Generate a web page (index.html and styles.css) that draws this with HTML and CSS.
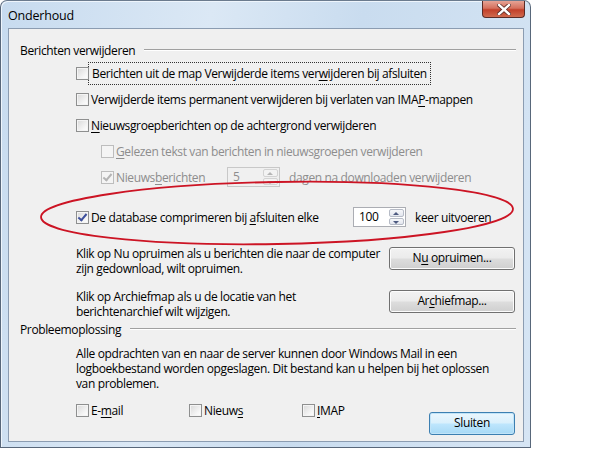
FILE: index.html
```html
<!DOCTYPE html>
<html lang="nl">
<head>
    <meta charset="UTF-8">
    <title>Onderhoud</title>
    <link rel="stylesheet" href="styles.css">
</head>
<body>
    <div class="window">
        <div class="titlebar">
            <span class="title">Onderhoud</span>
            <span class="close-btn">
                <svg width="14" height="11" viewBox="0 0 14 11"><path d="M2 1 L12 10 M12 1 L2 10" stroke="#5a2b26" stroke-width="4" stroke-linecap="square"/><path d="M2 1 L12 10 M12 1 L2 10" stroke="#fff" stroke-width="2.4" stroke-linecap="square"/></svg>
            </span>
        </div>
        <div class="client">
            <div class="group-head">
                <span>Berichten verwijderen</span>
                <span class="rule"></span>
            </div>

            <div class="row first">
                <span class="check"></span>
                <span class="focus">Berichten uit de map Verwijderde items ver<u>w</u>ijderen bij afsluiten</span>
            </div>
            <div class="row">
                <span class="check"></span>
                <span>Verwijderde items permanent verwijderen bij verlaten van IMA<u>P</u>-mappen</span>
            </div>
            <div class="row">
                <span class="check"></span>
                <span><u>N</u>ieuwsgroepberichten op de achtergrond verwijderen</span>
            </div>
            <div class="row indent disabled">
                <span class="check"></span>
                <span><u>G</u>elezen tekst van berichten in nieuwsgroepen verwijderen</span>
            </div>
            <div class="row indent disabled">
                <span class="check checked"></span>
                <span class="label-news">Nieuws<u>b</u>erichten</span>
                <span class="spin">
                    <span class="spin-value">5</span>
                    <span class="spin-btns"><span class="spin-up"></span><span class="spin-down"></span></span>
                </span>
                <span>dagen na downloaden verwijderen</span>
            </div>
            <div class="row compress">
                <span class="check checked"></span>
                <span class="label-compress">De database comprimeren bij <u>a</u>fsluiten elke</span>
                <span class="spin">
                    <span class="spin-value">100</span>
                    <span class="spin-btns"><span class="spin-up"></span><span class="spin-down"></span></span>
                </span>
                <span>keer uitvoeren</span>
            </div>

            <div class="action">
                <p>Klik op Nu opruimen als u berichten die naar de computer<br>zijn gedownload, wilt opruimen.</p>
                <span class="btn">N<u>u</u> opruimen...</span>
            </div>
            <div class="action">
                <p>Klik op Archiefmap als u de locatie van het<br>berichtenarchief wilt wijzigen.</p>
                <span class="btn">Ar<u>c</u>hiefmap...</span>
            </div>

            <div class="group-head second">
                <span>Probleemoplossing</span>
                <span class="rule"></span>
            </div>
            <p class="log-text">Alle opdrachten van en naar de server kunnen door Windows Mail in een<br>logboekbestand worden opgeslagen. Dit bestand kan u helpen bij het oplossen<br>van problemen.</p>
            <div class="bottom">
                <div class="log-checks">
                    <span class="log-item"><span class="check"></span>E-<u>m</u>ail</span>
                    <span class="log-item"><span class="check"></span>Nieuw<u>s</u></span>
                    <span class="log-item"><span class="check"></span><u>I</u>MAP</span>
                </div>
                <span class="btn default">Sluiten</span>
            </div>
        </div>
    </div>

    <svg class="annotation" width="593" height="449" viewBox="0 0 593 449">
        <ellipse cx="277" cy="213" rx="236" ry="31" fill="none" stroke="#cc1424" stroke-width="1.8" transform="rotate(-1 277 213)"/>
    </svg>
</body>
</html>
```

FILE: styles.css
```css
body {
    margin: 0;
    background: #fff;
    font-family: "Open Sans", "Noto Sans", sans-serif;
    font-size: 12px;
    letter-spacing: -0.37px;
    color: #000;
    position: relative;
    width: 593px;
    height: 449px;
    overflow: hidden;
}

u {
    text-decoration-thickness: 1px;
    text-underline-offset: 2px;
}

.window {
    box-sizing: border-box;
    width: 531px;
    height: 448px;
    padding: 0 6px 5px 7px;
    border: 1px solid #58677a;
    border-top-color: #6b7b8e;
    border-radius: 7px 7px 0 0;
    background: linear-gradient(100deg, #c7dbef 0%, #dbe8f5 35%, #c9dcef 60%, #d6e5f4 100%);
    box-shadow: inset 1px 1px 0 #eef5fc;
    display: flex;
    flex-direction: column;
}

.titlebar {
    height: 27px;
    flex-shrink: 0;
    display: flex;
    align-items: flex-start;
    justify-content: space-between;
}

.title {
    padding: 6px 0 0 0;
    font-size: 12.5px;
    letter-spacing: -0.2px;
    color: #000;
}

.close-btn {
    width: 41px;
    height: 16px;
    margin-right: -1px;
    border: 1px solid #5a2b26;
    border-top: none;
    border-radius: 0 0 4px 4px;
    background: linear-gradient(#e6a395 0%, #d5705d 45%, #c2402a 55%, #d06a4e 100%);
    display: flex;
    align-items: center;
    justify-content: center;
}

.client {
    flex: 1;
    background: #f0f0f0;
    border: 1px solid #8b9cb1;
    padding: 13px 7px 0 11px;
    display: flex;
    flex-direction: column;
}

.group-head {
    display: flex;
    align-items: center;
    height: 16px;
}

.group-head .rule {
    flex: 1;
    height: 1px;
    background: #a0a0a0;
    border-bottom: 1px solid #fff;
    margin-left: 9px;
}

.group-head.second {
    margin-top: 2px;
}

.row {
    display: flex;
    align-items: center;
    height: 26px;
    padding-left: 56px;
}

.row.first {
    margin-top: 2px;
}

.row.indent {
    padding-left: 81px;
}

.row.disabled {
    color: #8d8d8d;
}

.check {
    width: 11px;
    height: 11px;
    border: 1px solid #8e8f8f;
    background: linear-gradient(135deg, #d8d8d8 0%, #f6f6f6 70%, #fff 100%);
    box-shadow: inset 0 0 0 1px #f4f4f4;
    margin-right: 2px;
    flex-shrink: 0;
    position: relative;
}

.check.checked::after {
    content: "";
    position: absolute;
    left: 3px;
    top: 0;
    width: 3px;
    height: 7px;
    border: solid #3d4f9c;
    border-width: 0 2px 2px 0;
    transform: rotate(40deg);
}

.disabled .check {
    border-color: #bdbdbd;
    background: #f4f4f4;
}

.disabled .check.checked::after {
    border-color: #b4b4b4;
}

.focus {
    outline: 1px dotted #333;
    outline-offset: 2px;
    padding: 0 1px;
}

.label-news {
    width: 111px;
}

.spin {
    display: flex;
    width: 53px;
    height: 20px;
    border: 1px solid #abadb3;
    background: #fff;
    margin-right: 9px;
    box-sizing: border-box;
    flex-shrink: 0;
}

.disabled .spin {
    background: #f0f0f0;
    border-color: #c8c8c8;
}

.spin-value {
    flex: 1;
    padding: 1px 0 0 5px;
    line-height: 16px;
}

.spin-btns {
    width: 15px;
    display: flex;
    flex-direction: column;
    gap: 1px;
    padding: 1px;
}

.spin-up, .spin-down {
    flex: 1;
    border: 1px solid #b6bbc6;
    border-radius: 2px;
    background: linear-gradient(#f6f7fa, #e3e6ee);
    position: relative;
}

.spin-up::after, .spin-down::after {
    content: "";
    position: absolute;
    left: 3px;
    top: 2px;
    border-left: 3px solid transparent;
    border-right: 3px solid transparent;
}

.spin-up::after {
    border-bottom: 3px solid #4d5a80;
}

.spin-down::after {
    border-top: 3px solid #4d5a80;
}

.disabled .spin-up, .disabled .spin-down {
    border-color: #d3d3d3;
    background: #f3f3f3;
}

.disabled .spin-up::after {
    border-bottom-color: #b5b5b5;
}

.disabled .spin-down::after {
    border-top-color: #b5b5b5;
}

.row.compress {
    margin-top: 14px;
}

.label-compress {
    width: 262px;
}

.action {
    display: flex;
    justify-content: space-between;
    align-items: flex-start;
    padding-left: 56px;
    margin-top: 16px;
}

.action + .action {
    margin-top: 13px;
}

.action p {
    margin: 0;
    line-height: 15px;
}

.btn {
    box-sizing: border-box;
    width: 126px;
    height: 23px;
    line-height: 20px;
    text-align: center;
    border: 1px solid #707070;
    border-radius: 3px;
    background: linear-gradient(#f2f2f2 0%, #ebebeb 48%, #dddddd 52%, #cfcfcf 100%);
    box-shadow: inset 0 0 0 1px #fcfcfc;
    margin-right: 1px;
    margin-top: 1px;
}

.btn.default {
    width: 86px;
    border-color: #3c7fb1;
    background: linear-gradient(#eaf6fd 0%, #d9f0fc 48%, #bee6fd 52%, #a7d9f5 100%);
    box-shadow: inset 0 0 0 1px #c1e4f8;
    margin-top: 10px;
}

.log-text {
    margin: 9px 0 0 56px;
    line-height: 15px;
}

.bottom {
    display: flex;
    justify-content: space-between;
    align-items: flex-start;
    padding-left: 56px;
    margin-top: 11px;
}

.log-checks {
    display: flex;
}

.log-item {
    display: flex;
    align-items: center;
    width: 113px;
}

.annotation {
    position: absolute;
    left: 0;
    top: 0;
    pointer-events: none;
}
```
